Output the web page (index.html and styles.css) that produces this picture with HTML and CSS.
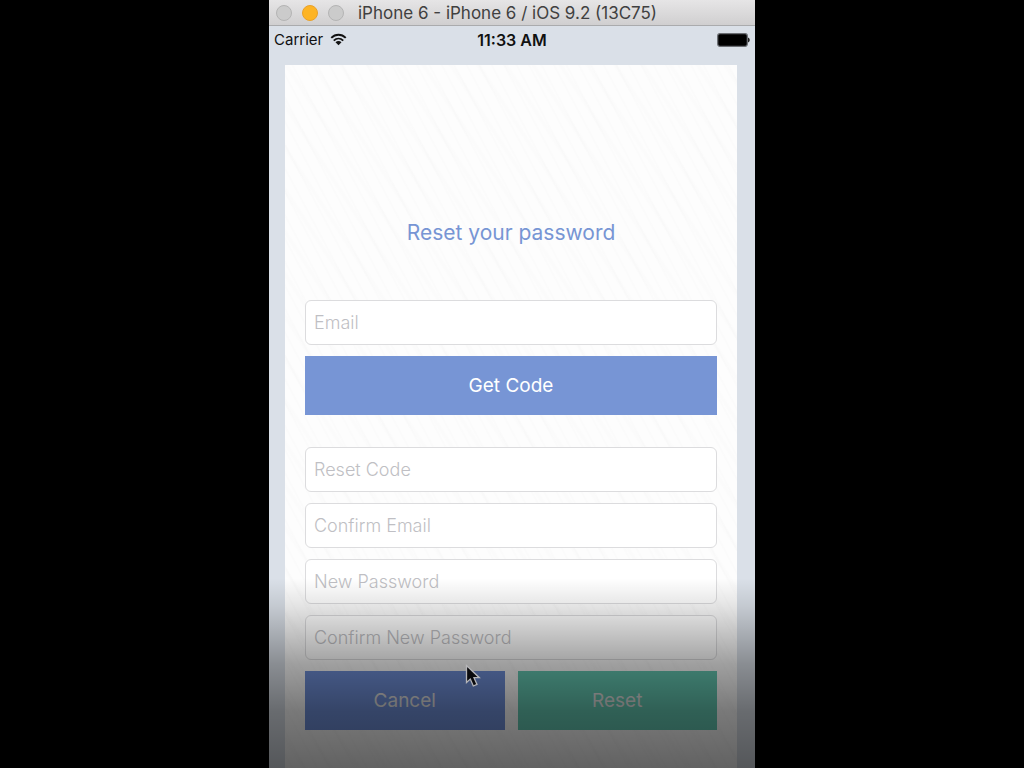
FILE: index.html
```html
<!DOCTYPE html>
<html lang="en">
<head>
<meta charset="utf-8">
<meta name="viewport" content="width=device-width, initial-scale=1">
<title>Reset your password</title>
<link rel="stylesheet" href="styles.css">
</head>
<body>
<div class="simulator">
  <header class="titlebar">
    <div class="lights">
      <button class="light" type="button" aria-label="Close"></button>
      <button class="light light-active" type="button" aria-label="Minimize"></button>
      <button class="light" type="button" aria-label="Zoom"></button>
    </div>
    <span class="window-title">iPhone 6 - iPhone 6 / iOS 9.2 (13C75)</span>
  </header>
  <div class="statusbar">
    <div class="carrier">
      <span>Carrier</span>
      <svg class="wifi" viewBox="0 0 18 14" aria-hidden="true">
        <path d="M1.2 5.2C5.700 .8 12.300 .8 16.800 5.200" fill="none" stroke="#111" stroke-width="2.100"/>
        <path d="M3.900 8.200C6.900 5.300 11.100 5.300 14.100 8.200" fill="none" stroke="#111" stroke-width="2"/>
        <path d="M5.800 9.900C7.700 8.200 10.300 8.200 12.200 9.900L9 13.300Z" fill="#111"/>
      </svg>
    </div>
    <span class="clock">11:33 AM</span>
    <svg class="battery" viewBox="0 0 33 14" aria-hidden="true">
      <rect x=".7" y=".7" width="29.600" height="12.600" rx="2.200" fill="#000" stroke="#6b6e73" stroke-width="1.200"/>
      <path d="M31 4.500C33.300 5.200 33.300 8.800 31 9.500Z" fill="#222"/>
    </svg>
  </div>
  <main class="card">
    <h1 class="heading">Reset your password</h1>
    <form class="form">
      <input class="field" type="email" placeholder="Email" aria-label="Email">
      <button class="button" type="button">Get Code</button>
      <div class="group">
        <input class="field" type="text" placeholder="Reset Code" aria-label="Reset Code">
        <input class="field" type="email" placeholder="Confirm Email" aria-label="Confirm Email">
        <input class="field" type="password" placeholder="New Password" aria-label="New Password">
        <input class="field" type="password" placeholder="Confirm New Password" aria-label="Confirm New Password">
        <div class="actions">
          <button class="button button-blue" type="button">Cancel</button>
          <button class="button button-green" type="submit">Reset</button>
        </div>
      </div>
    </form>
  </main>
  <div class="shade"></div>
  <svg class="pointer" viewBox="0 0 16 24" aria-hidden="true">
    <path d="M1.500 1.500V18.500L5.300 15L8.300 22L12 20.400L9 13.700H14.300Z" fill="#0a0a0c" stroke="#b5b5b8" stroke-width="1.300"/>
  </svg>
</div>
</body>
</html>
```
FILE: styles.css
```css
* {
  box-sizing: border-box;
}

body {
  margin: 0;
  background: #000;
  font-family: Inter, Roboto, sans-serif;
}

button,
input {
  font: inherit;
}

.simulator {
  position: relative;
  display: flex;
  flex-direction: column;
  max-width: 486px;
  min-height: 100vh;
  margin: 0 auto;
  background: #dae0e8;
}

.titlebar {
  display: flex;
  align-items: center;
  gap: 14px;
  height: 26px;
  padding: 0 7px;
  background: linear-gradient(#e6e5e6, #d0cfd0);
  border-bottom: 1px solid #aaabad;
}

.lights {
  display: flex;
  gap: 10px;
}

.light {
  width: 16px;
  height: 16px;
  padding: 0;
  border: 1px solid #b4b4b4;
  border-radius: 50%;
  background: #cbcbcb;
}

.light-active {
  border-color: #e9a12a;
  background: #fdb424;
}

.window-title {
  color: #404040;
  font-size: 17px;
  line-height: 24px;
  white-space: nowrap;
}

.statusbar {
  display: grid;
  grid-template-columns: 1fr auto 1fr;
  align-items: center;
  height: 27px;
  padding: 0 5px;
  color: #111;
  font-size: 15px;
}

.carrier {
  display: flex;
  align-items: center;
  gap: 7px;
}

.wifi {
  width: 17px;
  height: 13px;
}

.clock {
  font-size: 16px;
  font-weight: 600;
}

.battery {
  width: 33px;
  height: 14px;
  justify-self: end;
}

.card {
  flex: 1;
  margin: 12px 18px 0 16px;
  padding: 151px 20px 38px;
  background:
    repeating-linear-gradient(62deg, transparent 0 5px, rgba(0, 0, 0, 0.008) 6px 7px, transparent 8px 11px),
    repeating-linear-gradient(57deg, transparent 0 13px, rgba(0, 0, 0, 0.008) 15px 17px, transparent 19px 23px),
    #fdfdfd;
}

.heading {
  margin: 0 0 50px;
  color: #7795d4;
  font-size: 21px;
  font-weight: 400;
  line-height: 34px;
  text-align: center;
}

.form,
.group {
  display: flex;
  flex-direction: column;
  gap: 11px;
}

.group {
  margin-top: 21px;
}

.field {
  width: 100%;
  height: 45px;
  padding: 0 8px;
  border: 1px solid #dcdcde;
  border-radius: 6px;
  background: #fff;
  color: #333;
  font-size: 18px;
}

.field::placeholder {
  color: #bfbfc4;
  font-weight: 300;
  opacity: 1;
}

.button {
  height: 59px;
  padding: 0;
  border: 0;
  background: #7795d5;
  color: #fff;
  font-size: 19px;
}

.button-blue {
  background: #6f8fd8;
}

.button-green {
  background: #64c8b2;
}

.actions {
  display: grid;
  grid-template-columns: 1fr 1fr;
  gap: 13px;
}

.actions .button {
  color: #e2e2e2;
}

.shade {
  position: absolute;
  inset: auto 0 0;
  height: 190px;
  background: linear-gradient(transparent, rgba(0, 0, 0, 0.1) 15%, rgba(0, 0, 0, 0.37) 45%, rgba(0, 0, 0, 0.52) 70%, rgba(0, 0, 0, 0.61));
  pointer-events: none;
}

.pointer {
  position: absolute;
  left: 196px;
  top: 664px;
  width: 16px;
  height: 24px;
}
```
